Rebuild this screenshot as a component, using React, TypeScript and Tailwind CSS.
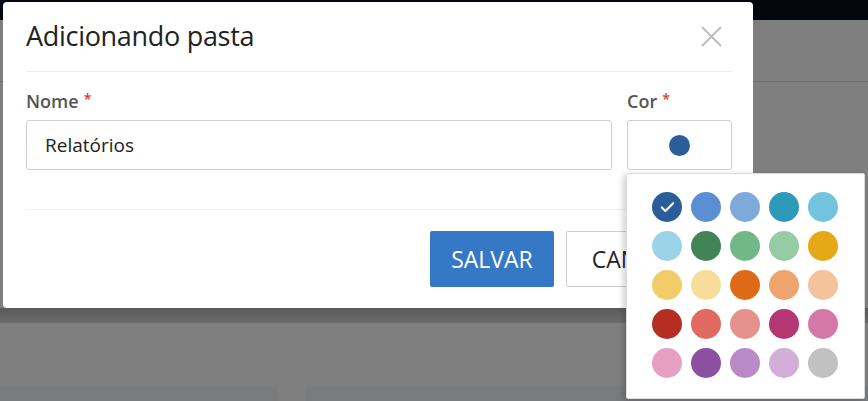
import { Check } from "lucide-react";

const colors = [
  "#2a5d9a", "#5a8fd2", "#7eaadb", "#2e9aba", "#72c3dd",
  "#9bd4e6", "#428455", "#72b886", "#97cba3", "#e5a816",
  "#f3cc6a", "#f7dc9a", "#de6a17", "#eea56d", "#f4c29b",
  "#b52e23", "#e06961", "#e6918c", "#b43774", "#d678a7",
  "#e6a0c2", "#8c50a0", "#b98bc6", "#d2aed9", "#c1c1c1",
];

const ColorPopover = () => {
  return (
    <div className="absolute left-[626px] top-[173px] h-[226px] w-[239px] rounded-[2px] border border-[#dcdcdc] bg-white pl-[25px] pt-[18px] shadow-[-3px_2px_6px_rgba(0,0,0,0.18)]">
      <div className="grid grid-cols-[repeat(5,30px)] gap-[9px]">
        {colors.map((c, i) => (
          <div
            key={c}
            className="flex h-[30px] w-[30px] items-center justify-center rounded-full"
            style={{ backgroundColor: c }}
          >
            {i === 0 && <Check className="h-[17px] w-[17px] text-white" strokeWidth={3} />}
          </div>
        ))}
      </div>
    </div>
  );
};

const Label = ({ text }: { text: string }) => (
  <p className="text-[18px] font-semibold leading-[24px] text-[#555]">
    {text}
    <span className="relative -top-[4px] ml-[5px] text-[14px] text-[#d63a2f]">*</span>
  </p>
);

const App = () => {
  return (
    <div
      className="relative h-[401px] w-[868px] overflow-hidden bg-[#7f7f7f]"
      style={{ fontFamily: '"Open Sans", "Noto Sans", sans-serif' }}
    >
      {/* page behind the overlay */}
      <div className="h-[20px] bg-[#04070e]" />
      <div className="h-[61px]" />
      <div className="h-px bg-[#6f6f6f]" />
      <div className="h-[226px]" />
      <div className="h-[15px] bg-gradient-to-b from-[#5b5b5b] to-[#6c6c6c]" />
      <div className="h-[64px]" />
      <div className="flex gap-[27px]">
        <div className="h-[20px] w-[278px] rounded-tr-[4px] bg-[#7a7b7d]" />
        <div className="h-[20px] flex-1 rounded-tl-[4px] bg-[#7a7b7d]" />
      </div>

      {/* modal */}
      <div className="absolute left-[3px] top-[2px] w-[750px] rounded-[4px] bg-white pl-[23px] pr-[21px] pb-[21px]">
        <div className="flex items-start justify-between pt-[15px] pb-[17px]">
          <h1 className="text-[27px] font-normal leading-[37px] tracking-[-0.3px] text-[#222]">
            Adicionando pasta
          </h1>
          <svg className="mr-[10px] mt-[9px]" width="21" height="21" viewBox="0 0 21 21">
            <path d="M1 1 L20 20 M20 1 L1 20" stroke="#bdbdbd" strokeWidth="2" fill="none" />
          </svg>
        </div>
        <div className="h-px bg-[#eeeeee]" />

        <div className="flex gap-[15px] pt-[17px]">
          <div className="flex-1">
            <Label text="Nome" />
            <div className="mt-[5px] flex h-[50px] items-center rounded-[3px] border border-[#cfcfcf] pl-[18px] text-[19px] text-[#222]">
              Relatórios
            </div>
          </div>
          <div className="w-[105px]">
            <Label text="Cor" />
            <div className="mt-[5px] flex h-[50px] items-center justify-center rounded-[3px] border border-[#cfcfcf]">
              <div className="h-[21px] w-[21px] rounded-full bg-[#2a5d9a]" />
            </div>
          </div>
        </div>

        <div className="mt-[39px] h-px bg-[#f0f0f0]" />

        <div className="mt-[21px] flex justify-end gap-[12px]">
          <button className="h-[56px] w-[124px] rounded-[2px] bg-[#3578c6] text-[23px] text-white">
            SALVAR
          </button>
          <button className="h-[56px] w-[166px] rounded-[2px] border border-[#cccccc] bg-white text-[23px] text-[#222]">
            CANCELAR
          </button>
        </div>
      </div>

      <ColorPopover />
    </div>
  );
};

export default App;
